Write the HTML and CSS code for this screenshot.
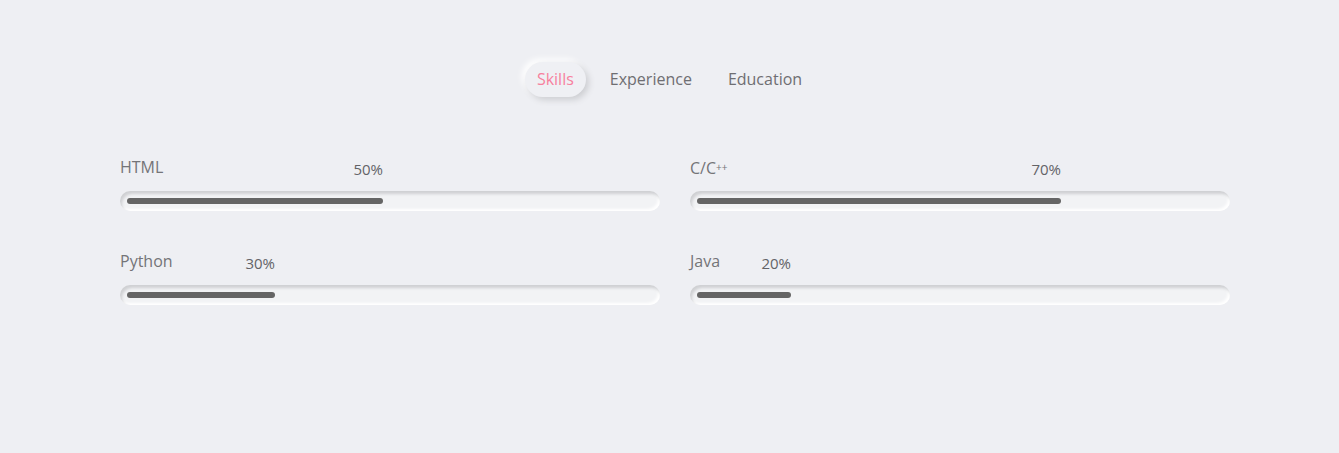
FILE: index.html
```html
<!DOCTYPE html>
<html lang="en">
<head>
<meta charset="utf-8">
<title>Skills</title>
<link rel="stylesheet" href="styles.css">
</head>
<body>
  <nav class="tabs">
    <span class="tab active">Skills</span>
    <span class="tab">Experience</span>
    <span class="tab">Education</span>
  </nav>
  <section class="skills">
    <div class="skill">
      <div class="head">
        <span class="name">HTML</span>
        <span class="pct" style="width: calc(50% - 7px)">50%</span>
      </div>
      <div class="track"><div class="fill" style="width: calc(50% - 14px)"></div></div>
    </div>
    <div class="skill">
      <div class="head">
        <span class="name">C/C<small>++</small></span>
        <span class="pct" style="width: calc(70% - 7px)">70%</span>
      </div>
      <div class="track"><div class="fill" style="width: calc(70% - 14px)"></div></div>
    </div>
    <div class="skill">
      <div class="head">
        <span class="name">Python</span>
        <span class="pct" style="width: calc(30% - 7px)">30%</span>
      </div>
      <div class="track"><div class="fill" style="width: calc(30% - 14px)"></div></div>
    </div>
    <div class="skill">
      <div class="head">
        <span class="name">Java</span>
        <span class="pct" style="width: calc(20% - 7px)">20%</span>
      </div>
      <div class="track"><div class="fill" style="width: calc(20% - 14px)"></div></div>
    </div>
  </section>
</body>
</html>
```
FILE: styles.css
```css
* { box-sizing: border-box; }
html, body {
  margin: 0;
  background: #eeeff3;
  font-family: "Open Sans", "Lato", sans-serif;
  color: #707070;
}
body { height: 453px; overflow: hidden; }

.tabs {
  display: flex;
  justify-content: center;
  gap: 12px;
  padding-top: 62px;
}
.tab {
  height: 35px;
  line-height: 35px;
  padding: 0 12px;
  font-size: 16px;
  border-radius: 18px;
  color: #6e6e72;
}
.tab.active {
  color: #f7809e;
  background: #eff0f4;
  box-shadow: 3px 3px 6px #cdced2, -3px -3px 6px #ffffff;
}

.skills {
  display: grid;
  grid-template-columns: 540px 540px;
  column-gap: 30px;
  row-gap: 41px;
  padding: 61px 0 0 120px;
}
.head {
  display: grid;
  height: 33px;
}
.name, .pct {
  grid-area: 1 / 1;
}
.name {
  font-size: 16px;
  line-height: 18px;
  color: #747478;
  justify-self: start;
}
.name small { font-size: 10px; vertical-align: 3px; }
.pct {
  justify-self: start;
  text-align: right;
  font-size: 15px;
  line-height: 18px;
  margin-top: 2px;
  color: #636367;
}
.track {
  height: 20px;
  border-radius: 10px;
  background: #f2f3f5;
  box-shadow: inset 2px 3px 3px #cfd0d3, inset -2px -2px 3px #ffffff;
  overflow: hidden;
}
.fill {
  height: 6px;
  margin: 7px 0 0 7px;
  border-radius: 3px;
  background: #656565;
}
```
